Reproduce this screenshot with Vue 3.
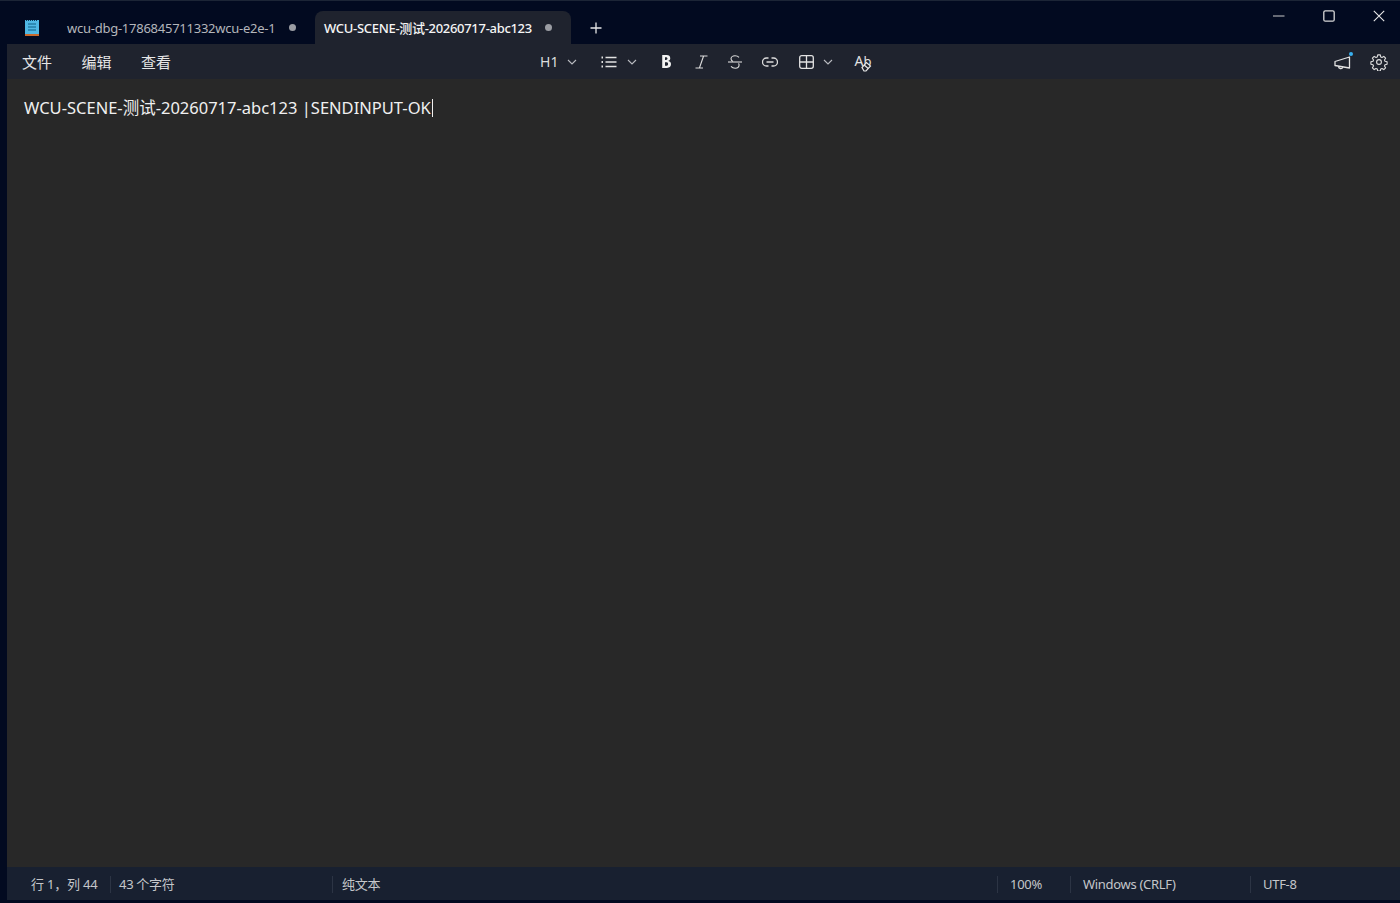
<template>
  <div class="window">
    <div class="titlebar">
      <svg class="app-icon" width="16" height="18" viewBox="0 0 16 18">
        <rect x="1" y="1" width="14" height="16" fill="#4fb8e4" />
        <rect x="1" y="15" width="14" height="2" fill="#c8692c" />
        <path d="M2 1.5h12" stroke="#0b3a55" stroke-width="1" stroke-dasharray="1 1" />
        <path d="M4 5h8M4 8h8M4 11h8" stroke="#0f5f86" stroke-width="1.2" />
      </svg>
      <div class="tab">
        <span class="tab-title">wcu-dbg-1786845711332wcu-e2e-1</span>
        <span class="dot"></span>
      </div>
      <div class="tab active">
        <span class="tab-title">WCU-SCENE-测试-20260717-abc123</span>
        <span class="dot"></span>
      </div>
      <svg class="plus" width="12" height="12" viewBox="0 0 12 12">
        <path d="M6 .5v11M.5 6h11" stroke="#e6e6e6" stroke-width="1.3" />
      </svg>
      <div class="controls">
        <svg width="12" height="12" viewBox="0 0 12 12"><path d="M0 6h11.5" stroke="#c9c9c9" stroke-width="1" /></svg>
        <svg width="12" height="12" viewBox="0 0 12 12"><rect x=".8" y=".8" width="10.4" height="10.4" rx="1.5" fill="none" stroke="#d8d8d8" stroke-width="1.3" /></svg>
        <svg width="12" height="12" viewBox="0 0 12 12"><path d="M.8.8l10.4 10.4M11.2.8L.8 11.2" stroke="#e8e8e8" stroke-width="1.1" /></svg>
      </div>
    </div>

    <div class="main">
      <div class="toolbar">
        <div class="menus">
          <span v-for="m in menus" :key="m">{{ m }}</span>
        </div>
        <div class="tools">
          <div class="tool heading">
            <span>H1</span>
            <svg class="chev" width="10" height="6" viewBox="0 0 10 6"><path d="M1 1l4 4 4-4" /></svg>
          </div>
          <div class="tool list">
            <svg width="16" height="12" viewBox="0 0 16 12" fill="none" stroke="#e2e2e2" stroke-width="1.3">
              <path d="M4.500 1.500H15.500M4.500 6H15.500M4.500 10.500H15.500" />
              <path d="M.5 1.500h1.500M.5 6h1.500M.5 10.500h1.500" stroke-width="1.800" />
            </svg>
            <svg class="chev" width="10" height="6" viewBox="0 0 10 6"><path d="M1 1l4 4 4-4" /></svg>
          </div>
          <svg class="bold" width="11" height="15" viewBox="0 0 10 14">
            <path d="M1 1h4.200c2 0 3.300 1 3.300 2.900 0 1.200-.7 2.100-1.700 2.500v.1c1.400.3 2.400 1.300 2.400 2.900C9.200 11.800 7.700 13 5.500 13H1z" fill="#f2f2f2" />
            <path d="M3.600 3v2.600h.9c.9 0 1.400-.5 1.400-1.300S5.400 3 4.600 3zM3.600 7.600V11h1.300c1 0 1.600-.6 1.600-1.700S5.900 7.600 4.900 7.600z" fill="#1f232e" />
          </svg>
          <svg class="italic" width="13" height="14" viewBox="0 0 13 14" fill="none" stroke="#dcdcdc" stroke-width="1.100">
            <path d="M5 1h7.500M.5 13H8M8.600 1L4.400 13" />
          </svg>
          <svg class="strike" width="14" height="14" viewBox="0 0 14 14" fill="none" stroke="#dcdcdc" stroke-width="1.100">
            <path d="M0 7h14" />
            <path d="M11 2.300C10 1.200 8.700.8 7 .8 4.700.8 3 1.900 3 3.800c0 1.200.7 2.200 2 2.800M3 11.300c1 1.200 2.400 1.900 4.200 1.900 2.300 0 3.900-1.200 3.900-3.100 0-.7-.2-1.300-.6-1.800" />
          </svg>
          <svg class="link" width="16" height="10" viewBox="0 0 16 10" fill="none" stroke="#dcdcdc" stroke-width="1.300">
            <path d="M6.500 1H4.500a4 4 0 0 0 0 8h2M9.500 1h2a4 4 0 0 1 0 8h-2M4.500 5h7" />
          </svg>
          <div class="tool table">
            <svg width="15" height="14" viewBox="0 0 15 14" fill="none" stroke="#e2e2e2" stroke-width="1.300">
              <rect x=".7" y=".7" width="13.600" height="12.600" rx="2" />
              <path d="M7.500 .7v12.600M.7 7h13.600" />
            </svg>
            <svg class="chev" width="10" height="6" viewBox="0 0 10 6"><path d="M1 1l4 4 4-4" /></svg>
          </div>
          <div class="spell">
            <span class="spell-a">A</span><span class="spell-b">b</span>
            <svg class="spell-mark" width="11" height="11" viewBox="0 0 11 11" fill="#1f232e" stroke="#e6e6e6" stroke-width="1.200">
              <path d="M1 6.500l4.500-5 4 3.500-4.500 5H3z" />
              <path d="M3.200 4l4 3.500" />
            </svg>
          </div>
        </div>
        <div class="right-tools">
          <div class="megaphone">
            <svg width="17" height="16" viewBox="0 0 17 16" fill="none" stroke="#e2e2e2" stroke-width="1.300">
              <path d="M1 6.500L15.500 2v11L1 10.500z" stroke-linejoin="round" />
              <path d="M4.500 11.200a2.300 2.300 0 0 0 4.400 1" />
            </svg>
            <span class="badge"></span>
          </div>
          <svg width="18" height="18" viewBox="0 0 24 24" fill="none" stroke="#dedede" stroke-width="1.500">
            <circle cx="12" cy="12" r="3.200" />
            <path d="M10.300 2.500h3.400l.6 2.800 1.700.7 2.400-1.500 2.400 2.400-1.500 2.400.7 1.700 2.800.6v3.400l-2.800.6-.7 1.700 1.500 2.400-2.400 2.400-2.400-1.500-1.700.7-.6 2.800h-3.400l-.6-2.800-1.700-.7-2.400 1.500-2.400-2.400 1.500-2.400-.7-1.700-2.800-.6v-3.400l2.800-.6.7-1.700-1.500-2.400 2.400-2.400 2.400 1.500 1.700-.7z" stroke-linejoin="round" />
          </svg>
        </div>
      </div>

      <div class="editor">
        <span>WCU-SCENE-测试-20260717-abc123 |SENDINPUT-OK</span><span class="caret"></span>
      </div>

      <div class="statusbar">
        <div class="cell pos">行 1，列 44</div>
        <div class="cell count">43 个字符</div>
        <div class="cell type">纯文本</div>
        <div class="cell zoom">100%</div>
        <div class="cell eol">Windows (CRLF)</div>
        <div class="cell enc">UTF-8</div>
      </div>
    </div>
  </div>
</template>

<script setup>
const menus = ['文件', '编辑', '查看']
</script>

<style>
html,
body {
  margin: 0;
  background: #020a20;
}
</style>

<style scoped>
.window {
  width: 1400px;
  height: 903px;
  display: flex;
  flex-direction: column;
  overflow: hidden;
  background: #020a20;
  border-top: 1px solid #1c2536;
  box-sizing: border-box;
  font-family: "Noto Sans", "Noto Sans CJK SC", sans-serif;
}

.titlebar {
  height: 43px;
  flex: none;
  display: flex;
  align-items: flex-end;
  padding-left: 24px;
}

.app-icon {
  margin: 0 0 7px 0;
}

.tab {
  height: 33px;
  box-sizing: border-box;
  display: flex;
  align-items: center;
  font-size: 13px;
  color: #b4b6bb;
}

.tab:not(.active) {
  width: 273px;
  padding-left: 27px;
}

.tab-title {
  white-space: nowrap;
  letter-spacing: -0.25px;
  width: 208px;
  flex: none;
}

.dot {
  width: 7px;
  height: 7px;
  border-radius: 50%;
  background: #9b9da3;
  margin-left: 14px;
  flex: none;
}

.tab.active {
  width: 256px;
  padding-left: 9px;
  margin-left: 2px;
  background: #1f232e;
  border-radius: 8px 8px 0 0;
  color: #f5f5f5;
}

.active .tab-title {
  width: auto;
  letter-spacing: -0.3px;
  font-weight: 500;
}

.active .dot {
  margin-left: 13px;
}

.plus {
  margin: 0 0 10px 19px;
}

.controls {
  margin-left: auto;
  align-self: flex-start;
  display: flex;
  gap: 38px;
  margin-top: 9px;
  padding-right: 15px;
}

.main {
  flex: 1;
  min-height: 0;
  margin-left: 7px;
  margin-bottom: 3px;
  display: flex;
  flex-direction: column;
}

.toolbar {
  height: 35px;
  flex: none;
  display: flex;
  align-items: center;
  background: #1f232e;
  color: #e6e6e6;
}

.menus {
  display: flex;
  gap: 29.5px;
  padding-left: 15px;
  font-size: 15px;
}

.tools {
  margin-left: 369px;
  display: flex;
  align-items: center;
  gap: 20px;
}

.tool {
  display: flex;
  align-items: center;
  gap: 9px;
}

.heading {
  font-size: 14px;
  color: #dcdcdc;
  margin-right: 4px;
}

.chev {
  fill: none;
  stroke: #b9bbc0;
  stroke-width: 1.1;
}

.list {
  gap: 10px;
  margin-right: 4px;
}

.italic {
  margin-left: 3px;
}

.table {
  margin-left: 1px;
}

.spell {
  position: relative;
  width: 17px;
  height: 18px;
  color: #e2e2e2;
  margin-left: 1px;
  line-height: 14px;
  white-space: nowrap;
}

.spell-a {
  font-size: 14px;
}

.spell-b {
  font-size: 13px;
}

.spell-mark {
  position: absolute;
  right: -1px;
  bottom: -1px;
}

.right-tools {
  margin-left: auto;
  display: flex;
  align-items: center;
  gap: 19px;
  padding-right: 12px;
}

.megaphone {
  position: relative;
  display: flex;
  margin-top: 2px;
}

.badge {
  position: absolute;
  top: -3px;
  right: -2px;
  width: 4px;
  height: 4px;
  border-radius: 50%;
  background: #39b1f1;
}

.editor {
  flex: 1;
  min-height: 0;
  background: #282828;
  color: #f0f0f0;
  font-size: 16.5px;
  line-height: 24px;
  padding: 17px 0 0 17px;
}

.caret {
  display: inline-block;
  width: 1px;
  height: 18px;
  background: #f0f0f0;
  margin-left: 1px;
  vertical-align: -3px;
}

.statusbar {
  height: 33px;
  flex: none;
  box-sizing: border-box;
  padding-top: 2px;
  display: flex;
  align-items: center;
  background: #182030;
  color: #c4c6ca;
  font-size: 13px;
}

.cell {
  height: 17px;
  line-height: 17px;
  box-sizing: border-box;
  white-space: nowrap;
  border-right: 1px solid #2c3444;
  letter-spacing: -0.3px;
}

.pos {
  width: 104px;
  padding-left: 24px;
  letter-spacing: -0.2px;
}

.count {
  width: 222px;
  padding-left: 8px;
}

.type {
  width: 665px;
  padding-left: 9px;
}

.zoom {
  width: 73px;
  padding-left: 12px;
}

.eol {
  width: 180px;
  padding-left: 12px;
}

.enc {
  padding-left: 12px;
  border-right: none;
}
</style>
